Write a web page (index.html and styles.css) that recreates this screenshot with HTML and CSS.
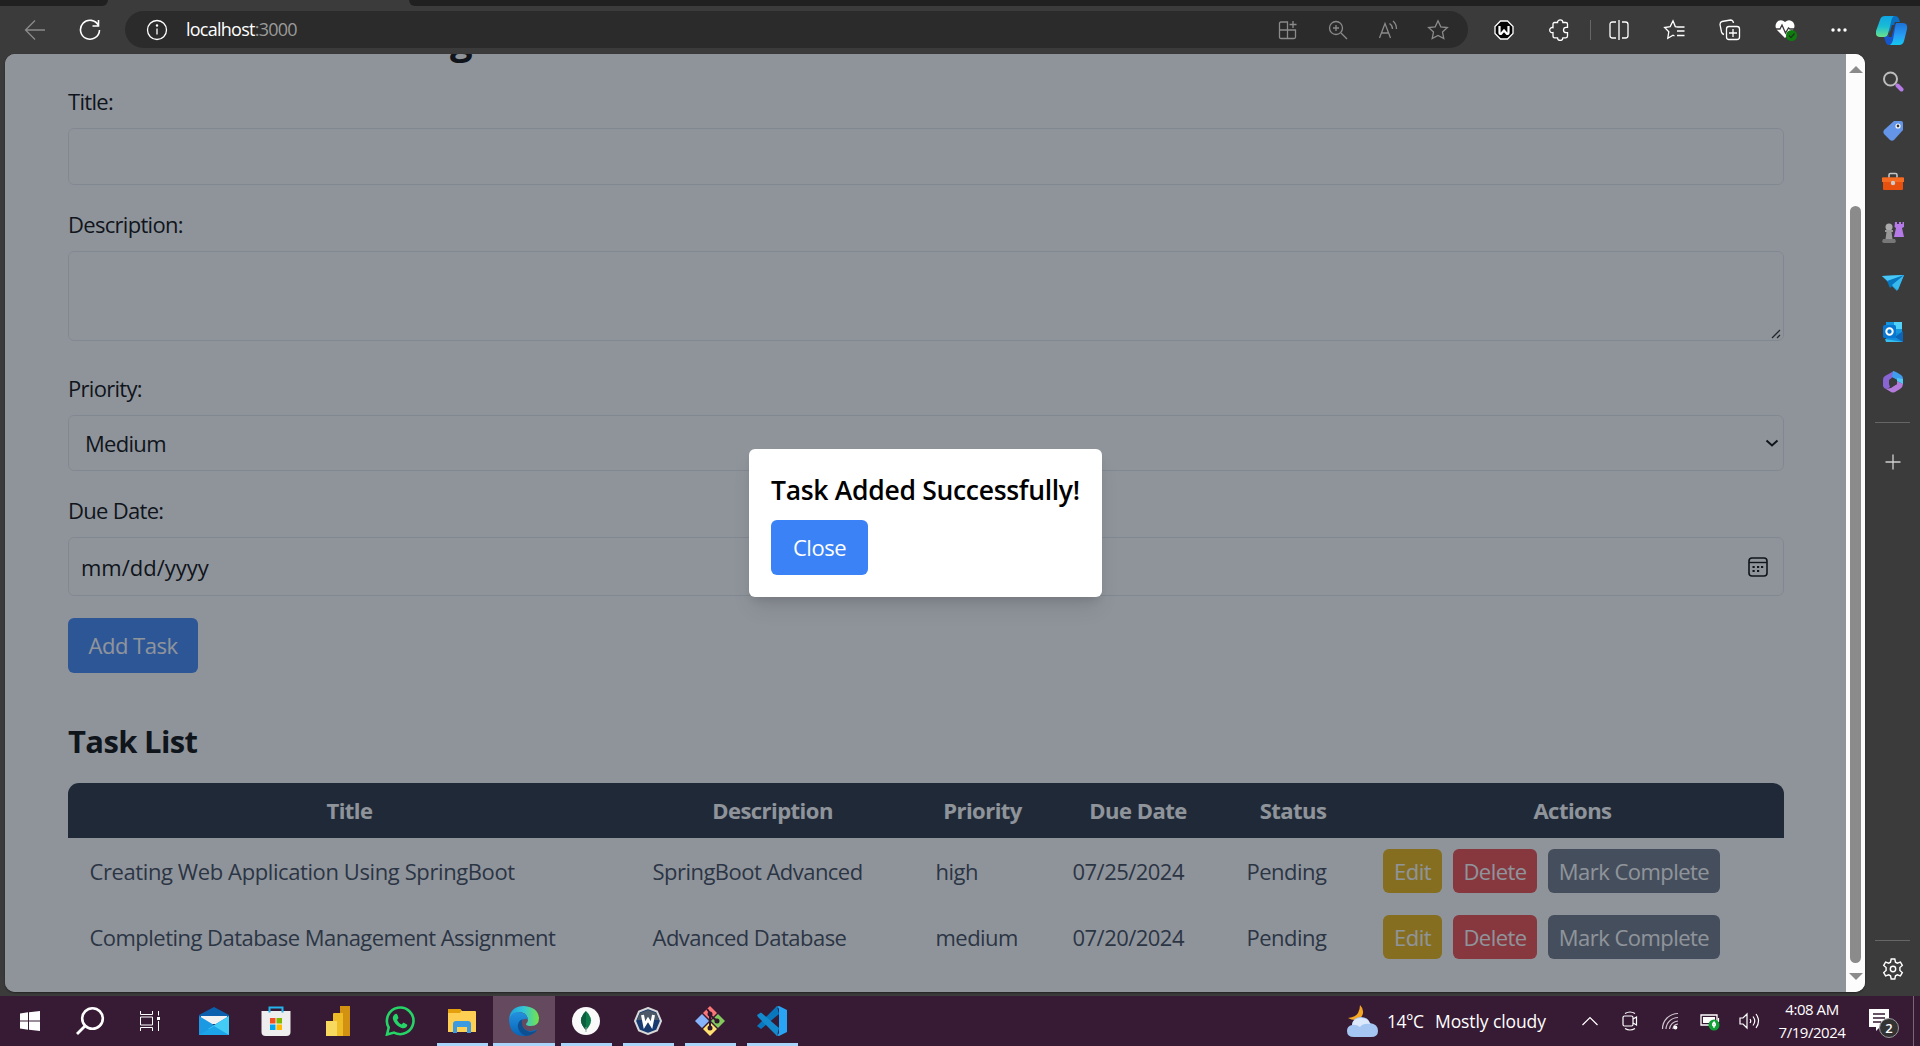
FILE: index.html
```html
<!DOCTYPE html>
<html lang="en">
<head>
<meta charset="utf-8">
<title>Task Manager</title>
<link rel="stylesheet" href="styles.css">
</head>
<body>
<div class="screen">
  <div class="tabs"><div class="tab-left"></div><div class="tab-right"></div></div>
  <header class="toolbar">
    <div class="tool dim"><svg width="22" height="22" viewBox="0 0 22 22"><path d="M21 11H1.500M11 1.500L1.500 11l9.500 9.500"/></svg></div>
    <div class="tool reload"><svg width="22" height="22" viewBox="0 0 22 22"><path d="M19.500 6.500A9.500 9.500 0 1 0 20.500 11M19.500 1v6h-6" stroke-width="1.600"/></svg></div>
    <div class="address">
      <div class="tool"><svg width="22" height="22" viewBox="0 0 22 22"><circle cx="11" cy="11" r="9.500"/><path d="M11 9.500v6"/><circle cx="11" cy="6.500" r=".6"/></svg></div>
      <div class="url">localhost<span class="port">:3000</span></div>
      <div class="slot grey"><svg width="20" height="20" viewBox="0 0 20 20"><path d="M1.500 10h16v7q0 1.500-1.500 1.500H3q-1.500 0-1.500-1.500V3.500Q1.500 2 3 2h6.500v16.500M15 1v7M11.500 4.500h7"/></svg></div>
      <div class="slot grey"><svg width="20" height="20" viewBox="0 0 20 20"><circle cx="8" cy="8" r="6.500"/><path d="M13 13l6 6M8 5v6M5 8h6"/></svg></div>
      <div class="slot grey"><svg width="20" height="20" viewBox="0 0 20 20"><path d="M1.500 18L7 3.500 12.500 18M3.500 13h7M11.500 3.500q3 2 3 5.500M15 1q3.500 3 3.500 8"/></svg></div>
      <div class="slot grey"><svg width="22" height="22" viewBox="0 0 22 22"><path d="M11 1.800l2.800 6 6.600.8-4.900 4.500 1.300 6.500L11 16.400l-5.800 3.200 1.300-6.500L1.600 8.600l6.600-.8z"/></svg></div>
    </div>
    <div class="actions">
      <div class="ext"><svg width="20" height="20" viewBox="0 0 20 20"><path d="M6.500 1h7L19 6.500v7L13.500 19h-7L1 13.500v-7z" fill="#050505"/><path d="M5.500 6v6.500q0 1.500 1.500 1.500h0L10 10.500l3 3.500q1.500 0 1.500-1.500V6" stroke-width="2.200"/></svg></div>
      <div class="ext"><svg width="22" height="22" viewBox="0 0 22 22"><path d="M4 5q0-1.500 1.500-1.500H8.500a2.700 2.700 0 0 1 5.400 0h3q1.600 0 1.600 1.500v3.300h-1.300a2.700 2.700 0 0 0 0 5.400h1.300V17q0 1.800-1.600 1.800h-3a2.700 2.700 0 0 1-5.400 0H5.500Q4 18.800 4 17v-3.400a2.600 2.600 0 1 1 0-5z"/></svg></div>
      <div class="ext split"><svg width="20" height="20" viewBox="0 0 20 20"><path d="M10 0v20M7 2H3.500Q1 2 1 4.500v11Q1 18 3.500 18H7M13 2h3.500Q19 2 19 4.500v11q0 2.500-2.500 2.500H13"/></svg></div>
      <div class="ext"><svg width="22" height="22" viewBox="0 0 22 22"><path d="M15 8l-2.700-.4L10 1.800 7.200 7.600 1.600 8.500l4.200 4.200-1 6.500L10 16.200l1.500.8M14 8h7.500M14 12h7.500M14 16.500h7.500"/></svg></div>
      <div class="ext"><svg width="22" height="22" viewBox="0 0 22 22"><rect x="7.500" y="7.500" width="13" height="13" rx="2.500"/><path d="M14 10v8M10 14h8M5 15.500Q3 15 2.500 13L1 5.500Q1 3 3 2.500L11.500 1Q14 1 14.500 4"/></svg></div>
      <div class="ext"><svg width="24" height="24" viewBox="0 0 24 24"><path d="M11 20L3 12Q0 8 3 4q4-3.500 8 0 4-3.500 8 0 3 4 0 8z" fill="#fff" stroke="none"/><path d="M1 11h5l2-4 3.500 8 3-5 1.500 1h4" stroke="#3b3b3b"/><circle cx="17.500" cy="17.500" r="5.500" fill="#107c10" stroke="none"/><path d="M15 17.500l2 2 3.500-4" stroke="#1c351c"/></svg></div>
      <div class="ext dots"><svg width="20" height="20" viewBox="0 0 20 20"><g fill="#fff" stroke="none"><circle cx="4" cy="10" r="1.700"/><circle cx="10" cy="10" r="1.700"/><circle cx="16" cy="10" r="1.700"/></g></svg></div>
      <div class="ext copilot"><svg width="32" height="30" viewBox="0 0 32 30"><defs><linearGradient id="ca" x2="0" y2="1"><stop stop-color="#10a5e5"/><stop offset=".5" stop-color="#19bdd4"/><stop offset="1" stop-color="#6ce28b"/></linearGradient><linearGradient id="cb" x2="0" y2="1"><stop stop-color="#1c71d8"/><stop offset=".6" stop-color="#279ff5"/><stop offset="1" stop-color="#15c8ef"/></linearGradient></defs><g stroke="none"><path d="M10 1h9q3 0 4 3l1 3h-5l-5 13z" fill="#0b6fc2"/><path d="M8 22l6-3 5-10h7q6 0 4 7l-3 11q-1 3-5 3H13q-3 0-4-5z" fill="#1755cb"/><path d="M9 1h9q-2 1-3 6l-3 12q-1 3-4 3H4q-5 0-4-6L4 5q1-4 5-4z" fill="url(#ca)"/><path d="M20 8h7q5 0 4 6l-3 12q-1 4-5 4h-9q2-1 3-5z" fill="url(#cb)"/><path d="M16 10h3l-3.500 12h-3z" fill="#3b3b3b"/></g></svg></div>
    </div>
  </header>

  <div class="middle">
    <div class="viewport">
      <main class="page">
        <h1 class="page-title">g</h1>
        <label class="label">Title:</label>
        <div class="field title-field"></div>
        <label class="label">Description:</label>
        <div class="field area"><svg width="10" height="10" viewBox="0 0 10 10"><path d="M1 9l8-8M6 9l3-3" stroke="#222" stroke-width="1.300"/></svg></div>
        <label class="label">Priority:</label>
        <div class="field select"><span class="medium">Medium</span><svg width="14" height="14" viewBox="0 0 14 14"><path d="M1.500 4.500L7 9.500l5.500-5" stroke="#000" stroke-width="2"/></svg></div>
        <label class="label">Due Date:</label>
        <div class="field date"><span class="mask">mm/dd/yyyy</span><svg width="20" height="20" viewBox="0 0 20 20" stroke="#000"><rect x="1" y="1" width="18" height="18" rx="3" stroke-width="1.600"/><path d="M1 5.500h18" stroke-width="1.400"/><path d="M4.500 10h2.200M9 10h2.200M13 10h2.200M4.500 14h2.200M9 14h2.200" stroke-width="2"/></svg></div>
        <div class="btn add">Add Task</div>
        <h2 class="list-title">Task List</h2>
        <div class="table">
          <div class="row head"><div>Title</div><div>Description</div><div>Priority</div><div>Due Date</div><div>Status</div><div>Actions</div></div>
          <div class="row"><div class="wide">Creating Web Application Using SpringBoot</div><div>SpringBoot Advanced</div><div>high</div><div>07/25/2024</div><div>Pending</div><div class="ops"><span class="op edit">Edit</span><span class="op del">Delete</span><span class="op mark">Mark Complete</span></div></div>
          <div class="row"><div>Completing Database Management Assignment</div><div>Advanced Database</div><div>medium</div><div>07/20/2024</div><div>Pending</div><div class="ops"><span class="op edit">Edit</span><span class="op del">Delete</span><span class="op mark">Mark Complete</span></div></div>
        </div>
      </main>
      <div class="scrollbar"><i class="up"></i><i class="thumb"></i><i class="down"></i></div>
      <div class="overlay">
        <div class="modal"><h3 class="modal-title">Task Added Successfully!</h3><div class="btn close">Close</div></div>
      </div>
    </div>

    <aside class="sidebar">
      <div class="side"><svg width="22" height="22" viewBox="0 0 22 22"><circle cx="8.500" cy="9" r="6.500" stroke="#bdbdbd" stroke-width="2"/><path d="M14 14l2 2" stroke="#999" stroke-width="2"/><path d="M15.500 15.500l4 4" stroke="#b77be8" stroke-width="4" stroke-linecap="round"/></svg></div>
      <div class="side"><svg width="22" height="22" viewBox="0 0 22 22"><path d="M12 1h7q2 0 2 2v7l-9 10q-2 1.500-4 0l-6-6q-1.500-2 0-4z" fill="#6495e8"/><circle cx="16" cy="6" r="2" fill="#333" stroke="#fff" stroke-width="1.200"/></svg></div>
      <div class="side"><svg width="22" height="20" viewBox="0 0 22 20"><path d="M7 7V4q0-1.500 1.500-1.500h5Q15 2.500 15 4v3" stroke="#c5c5c5" stroke-width="1.600"/><path d="M1 6.500h20V18q0 1-1 1H2q-1 0-1-1z" fill="#e8510d"/><path d="M0 6.500h22V11H0z" fill="#f56b22"/><circle cx="11" cy="12" r="2.200" fill="#ccc"/></svg></div>
      <div class="side"><svg width="22" height="22" viewBox="0 0 22 22"><path d="M13 1h2v2h2V1h2v2h1.500V1H22v5l-2 1 2 9H12l2-9-1.500-1z" fill="#b57ae8"/><circle cx="7" cy="6" r="3.500" fill="#aaa"/><path d="M3 9h8v2H9.500l1 7h-7l1-7H3z" fill="#989898"/><path d="M1 18h12q2 4-1 4H2q-3 0-1-4z" fill="#777"/></svg></div>
      <div class="side"><svg width="22" height="20" viewBox="0 0 22 20"><path d="M0 4l22-1-7 16-5-5z" fill="#27a9ea"/><path d="M0 4l22-1L7 10z" fill="#48c8f7"/><path d="M5 9l17-6L8 16z" fill="#0877bf"/><path d="M22 3L10 13l6 5z" fill="#35b9ef"/></svg></div>
      <div class="side"><svg width="22" height="22" viewBox="0 0 22 22"><path d="M4 1h16v13H4z" fill="#1595dd"/><path d="M12 1h8v7h-8z" fill="#50d2fb"/><path d="M4 12h17v9H4z" fill="#118bdc"/><path d="M13 16l8-6v11z" fill="#0c64b5"/><path d="M3 18l18 3H4z" fill="#37bff0"/><rect x="1" y="4" width="13" height="13" rx="1.500" fill="#0877d1"/><circle cx="7.500" cy="10.500" r="3.200" stroke="#fff" stroke-width="2"/></svg></div>
      <div class="side"><svg width="22" height="22" viewBox="0 0 22 22"><path d="M12 0L3 5Q1 6 1 9v6q1 3 4 3l3-2-1-3V9l5-4z" fill="#8965d4"/><path d="M11 0q2 0 8 4 2 1 2 4v5l-6-4-5-3z" fill="#3f9df0"/><path d="M21 13q0 3-3 5l-5 3q-2 1-4 0l-5-3 5-1 6-4v-3z" fill="#b47bdd"/><path d="M15 7l6 1v5l-6-3z" fill="#4fc8f6"/><path d="M8 9l3-2 4 2v4l-4 2-3-2z" fill="#3b3b3b"/></svg></div>
      <div class="rule"></div>
      <div class="side plus"><svg width="16" height="16" viewBox="0 0 16 16"><path d="M8 .5v15M.5 8h15" stroke="#d0d0d0" stroke-width="1.300"/></svg></div>
      <div class="rule low"></div>
      <div class="side gear"><svg width="22" height="22" viewBox="0 0 22 22"><path d="M9.200 1h3.600l.7 3.200 1.800 1 3.100-1 1.900 3.200-2.400 2.200v2.800l2.400 2.200-1.900 3.200-3.100-1-1.800 1-.7 3.200H9.200l-.7-3.200-1.800-1-3.100 1-1.900-3.200 2.400-2.200V9.600L1.700 7.400l1.900-3.200 3.100 1 1.800-1z" stroke="#fff" stroke-width="1.400"/><circle cx="11" cy="11" r="2.700" stroke="#fff" stroke-width="1.400"/></svg></div>
    </aside>
  </div>

  <footer class="taskbar">
    <div class="task small"><svg width="20" height="20" viewBox="0 0 20 20"><path d="M0 2.500L8 1.300v8.200H0zM9 1.200L20 0v9.500H9zM0 10.500h8v8.200L0 17.500zM9 10.500h11V20L9 18.800z" fill="#fff"/></svg></div>
    <div class="task small"><svg width="30" height="30" viewBox="0 0 30 30"><circle cx="17.500" cy="12.500" r="10.300" stroke="#fff" stroke-width="2.600"/><path d="M10 20l-8 8" stroke="#fff" stroke-width="2.800"/></svg></div>
    <div class="task small"><svg width="20" height="20" viewBox="0 0 20 20"><path d="M.5 0v3.500h12V0M.5 20v-3.500h12V20M.5 6h12v8H.5zM18.500 0v4.500M18.500 10v10" stroke="#fff"/><rect x="17" y="6" width="3" height="3" fill="#fff"/></svg></div>
    <div class="task mail"><svg width="30" height="30" viewBox="0 0 30 30"><path d="M0 9L15 1l15 8v3H0z" fill="#0b60ad"/><path d="M2 10h26v8H2z" fill="#f1f1f1"/><path d="M0 10l15 9 15-9v19H0z" fill="#1b99e3"/><path d="M30 10L9 23l21 6z" fill="#42cbf5"/><path d="M0 29l15-9 15 9z" fill="#1da5e9"/></svg></div>
    <div class="task"><svg width="30" height="30" viewBox="0 0 30 30"><path d="M8.500 7V1.500h13V7" stroke="#24b4ed" stroke-width="2"/><path d="M.5 5h29v21q0 4-4 4h-21q-4 0-4-4z" fill="#eee"/><path d="M8.500 5v1.500M21.500 5v1.500" stroke="#24b4ed" stroke-width="2"/><path d="M9 12h5.500v5.500H9z" fill="#f25022"/><path d="M15.500 12H21v5.500h-5.500z" fill="#7fba00"/><path d="M9 18.500h5.500V24H9z" fill="#00a4ef"/><path d="M15.500 18.500H21V24h-5.500z" fill="#ffb900"/></svg></div>
    <div class="task"><svg width="24" height="30" viewBox="0 0 24 30"><path d="M14 0h10v30H14z" fill="#d39112"/><path d="M7 8q0-1 1-1h9v23H7z" fill="#edbc26"/><path d="M0 15h11v15H0z" fill="#f7d95f"/></svg></div>
    <div class="task"><svg width="30" height="30" viewBox="0 0 30 30"><path d="M2 28.500l1.700-7A13.300 13.300 0 1 1 9 26.600z" stroke="#25d366" stroke-width="2.600"/><path d="M9.500 8.500q2-1.500 3 .5l1 3-1.500 2q1.500 3 4.500 4.500l2-2 3.500 2q1 1-1 3-2 1.500-5 .3-5-2-7.500-7-1.800-4 1-6.300z" fill="#25d366"/></svg></div>
    <div class="task open"><svg width="28" height="24" viewBox="0 0 28 24"><path d="M0 1q0-1 1-1h11l2 2h13q1 0 1 1v20H0z" fill="#ffcf54"/><path d="M0 1q0-1 1-1h11l1.500 1.500L12 4H0z" fill="#e5a00d"/><path d="M5 24v-9q0-3 3-3h12q3 0 3 3v9h-4v-6H9v6z" fill="#3c9ae0"/></svg></div>
    <div class="task open active"><svg width="30" height="30" viewBox="0 0 30 30"><defs><linearGradient id="e1"><stop stop-color="#1b9fdf"/><stop offset=".5" stop-color="#35c6d7"/><stop offset="1" stop-color="#75e445"/></linearGradient><linearGradient id="e2" x2="0" y2="1"><stop stop-color="#2392df"/><stop offset="1" stop-color="#0964b8"/></linearGradient></defs><path d="M0 14Q1 0 15 0q14 1 15 12 0 8-8 8-5 0-5-2 2-2 2-4-1-8-9-8Q3 7 0 14z" fill="url(#e1)"/><path d="M0 14Q2 6 9 6q9 0 10 8-2-2-4-1-4 2-2 7 3 6 10 5l5-2q-4 7-13 7Q1 30 0 14z" fill="url(#e2)"/><path d="M14 13q-6 2-5 9 2 6 8 8 8-1 11-6-4 2-7 2-8-3-8-8-1-3 1-5z" fill="#0e4f92"/></svg></div>
    <div class="task open"><svg width="28" height="28" viewBox="0 0 28 28"><circle cx="14" cy="14" r="14" fill="#fafafa"/><path d="M14 4q10 9 0 19Q4 13 14 4z" fill="#0e7b4b"/><path d="M14 4q-10 9 0 19z" fill="#0b5e3e"/><path d="M14 20v5" stroke="#8da99a"/></svg></div>
    <div class="task open"><svg width="28" height="28" viewBox="0 0 28 28"><path d="M14 1l9 3.500L27 14l-4 9.500L14 27l-9-3.500L1 14l4-9.500z" fill="#173a70" stroke="#d8d8d8" stroke-width="2"/><path d="M14 3L6 6l-3 7h22l-3-7z" fill="#4c5866"/><path d="M8.500 8l2 10L14 12.500l3.500 5.500 2-10" stroke="#fff" stroke-width="3"/></svg></div>
    <div class="task open"><svg width="30" height="30" viewBox="0 0 30 30"><path d="M15 0l7 7-7 7-7-7z" fill="#fb7777"/><path d="M7 8l7 7-7 7-7-7z" fill="#87b3fb"/><path d="M23 8l7 7-7 7-7-7z" fill="#83c95b"/><path d="M15 16l7 7-7 7-7-7z" fill="#ffe071"/><path d="M12 3l3 4v14M15 9l7 6" stroke="#31172f" stroke-width="2"/><g fill="#31172f"><circle cx="15" cy="8" r="2.500"/><circle cx="22" cy="15" r="2.500"/><circle cx="15" cy="22" r="2.500"/></g></svg></div>
    <div class="task open"><svg width="30" height="30" viewBox="0 0 30 30"><path d="M22 8L4 23l-4-3 1-1L20 0z" fill="#0877bd"/><path d="M22 22L4 6.500 0 9l1 2 19 19z" fill="#148ace"/><path d="M22 0l8 4v22l-8 4-3-1q3 0 3-3V4q0-3-3-3z" fill="#29a4f4"/></svg></div>
    <div class="tray">
      <svg class="weather" width="31" height="34" viewBox="0 0 31 34"><path d="M13 1q5 5 2 11-5 7-14 2 8-1 10-5 2-4 2-8z" fill="#f5a623"/><path d="M7 33q-7 0-7-6 0-5 5-6 1-8 9-8 7 0 9 6 8 1 8 8 0 6-7 6z" fill="#a5c5f3"/><path d="M5 21q1-7 9-7t9 6q-7-1-10 3-4-3-8-2z" fill="#dce9fc"/></svg>
      <span class="temp">14°C</span><span class="cloudy">Mostly cloudy</span>
      <div class="tray-icon"><svg width="16" height="10" viewBox="0 0 16 10"><path d="M.5 9L8 1.500 15.500 9"/></svg></div>
      <div class="tray-icon"><svg width="16" height="20" viewBox="0 0 16 20"><rect x="1" y="5" width="10" height="10" rx="1.500"/><path d="M11 8l3.500-2v8L11 12M3 2.500q5-3 10 0M3 17.500q5 3 10 0"/></svg></div>
      <div class="tray-icon"><svg width="18" height="18" viewBox="0 0 18 18"><g opacity=".75"><path d="M1.500 17A15.500 15.500 0 0 1 17 1.500M5 17A12 12 0 0 1 17 5.500M8.500 17A9 9 0 0 1 17 9"/><path d="M12 17a5.500 5.500 0 0 1 5-5"/></g><circle cx="14.500" cy="15.500" r="1.300" fill="#fff"/></svg></div>
      <div class="tray-icon"><svg width="20" height="20" viewBox="0 0 20 20"><path d="M1 4h16v10H1z" stroke-width="1.300"/><path d="M3 6h12v6H3z" fill="#fff" stroke="none"/><path d="M18.500 7v4"/><circle cx="14" cy="14" r="5.500" fill="#109f35" stroke="none"/><path d="M14 11q3 2.500 0 4.500-3-2 0-4.500v6"/></svg></div>
      <div class="tray-icon"><svg width="22" height="18" viewBox="0 0 22 18"><path d="M1 6h3l4-4v14l-4-4H1zM11 7q1.500 2 0 4M14 4.500q3.500 4.500 0 9M17 2q5 7 0 14"/></svg></div>
      <div class="clock"><span class="time">4:08 AM</span><span class="day">7/19/2024</span></div>
      <div class="notice"><svg width="20" height="22" viewBox="0 0 20 22"><path d="M0 0h20v18h-9l-4 4v-4H0z" fill="#fff"/><path d="M4 5h12M4 9h12M4 13h8" stroke="#371a33" stroke-width="1.300"/></svg><span class="badge">2</span></div>
      <i class="peek"></i>
    </div>
  </footer>
</div>
</body>
</html>
```
FILE: styles.css
```css
* { box-sizing: border-box; }
body { margin: 0; background: #3b3b3b; font-family: "Open Sans", "Noto Sans", sans-serif; }
svg { fill: none; display: block; flex: none; }
h1, h2, h3 { margin: 0; }
.screen { width: 1920px; height: 1046px; overflow: hidden; display: flex; flex-direction: column; background: #3b3b3b; }

/* browser chrome */
.tabs { display: flex; justify-content: space-between; height: 6px; flex: none; }
.tab-left { width: 108px; background: #202020; border-bottom-right-radius: 6px; }
.tab-right { width: 1511px; background: #202020; border-bottom-left-radius: 6px; }
.toolbar { display: flex; align-items: center; height: 48px; flex: none; padding: 0 0 1px 15px; stroke: #fff; stroke-width: 1.3; }
.tool, .slot, .ext, .side, .task, .tray-icon { display: flex; align-items: center; justify-content: center; flex: none; }
.tool { width: 40px; }
.dim, .grey { stroke: #8b8b8b; }
.reload { margin: 0 15px; }
.address { display: flex; align-items: center; width: 1343px; height: 37px; border-radius: 19px; background: #2b2b2b; padding: 0 5px 0 12px; }
.url { flex: 1; margin-left: 9px; color: #fff; font-size: 18px; letter-spacing: -.75px; line-height: 24px; padding-bottom: 1px; }
.port { color: #9a9a9a; }
.slot { width: 50px; }
.actions { display: flex; align-items: center; margin-left: 8px; }
.ext { width: 56px; height: 20px; }
.split { margin-left: 2px; border-left: 1px solid #666; }
.dots { width: 50px; }

.middle { display: flex; height: 938px; flex: none; }
.viewport { position: relative; display: flex; width: 1860px; margin-left: 5px; border-radius: 10px; overflow: hidden; background: #fff; box-shadow: 0 1px 2px #222; }
.page { width: 1841px; padding: 0 62px 0 63px; display: flex; flex-direction: column; font-size: 22px; color: #000; }
.page-title { height: 62px; padding-left: 382px; line-height: 60px; font-size: 40px; margin: -45px 0 14px; }
.label { line-height: 32px; height: 33px; flex: none; margin-bottom: 10px; letter-spacing: -.7px; }
.field { display: flex; align-items: center; justify-content: space-between; flex: none; border: 1px solid #e5e7eb; border-radius: 6px; margin-bottom: 23px; }
.title-field { height: 57px; }
.area { height: 90px; align-items: flex-end; justify-content: flex-end; padding: 1px 2px; margin-bottom: 31px; }
.select { height: 56px; padding: 0 4px 0 16px; }
.medium { letter-spacing: -.7px; }
.date { height: 59px; padding: 0 15px 0 12px; margin-bottom: 22px; }
.btn { display: flex; align-items: center; justify-content: center; height: 55px; border-radius: 6px; background: #3b82f6; color: #fff; font-size: 22px; flex: none; letter-spacing: -.5px; padding-bottom: 2px; }
.add { width: 130px; }
.list-title { font-size: 31px; line-height: 44px; margin: 46px 0 20px; letter-spacing: -.65px; }
.table { flex: none; border-radius: 11px 11px 0 0; overflow: hidden; color: #374151; letter-spacing: -.53px; }
.row { display: grid; grid-template-columns: 563px 283px 137px 174px 136px 423px; height: 66px; align-items: center; white-space: nowrap; }
.row > div { padding-left: 21.5px; padding-bottom: 1px; }
.row > .wide { letter-spacing: -.4px; }
.head { height: 55px; background: #1f2937; color: #fff; font-weight: 700; }
.row.head > div { text-align: center; padding: 0 0 1px; }
.row > .ops { display: flex; gap: 11px; padding: 0 0 0 22px; }
.op { display: flex; align-items: center; justify-content: center; height: 44px; border-radius: 6px; color: #fff; padding-bottom: 1px; }
.edit { width: 59px; background: #eab308; }
.del { width: 84px; background: #ef4444; }
.mark { width: 172px; background: #6b7280; }
.scrollbar { width: 19px; background: #fcfcfc; display: flex; flex-direction: column; align-items: center; }
.up { margin-top: 12px; border: 7px solid transparent; border-top: 0; border-bottom: 7px solid #8b8b8b; }
.thumb { width: 11px; height: 757px; margin-top: 133px; border-radius: 6px; background: #8b8b8b; }
.down { margin-top: 10px; border: 7px solid transparent; border-bottom: 0; border-top: 7px solid #8b8b8b; }
.overlay { position: absolute; inset: 0 19px 0 0; display: flex; align-items: center; justify-content: center; background: rgba(31, 41, 55, .5); }
.modal { width: 353px; height: 148px; padding: 22px; background: #fff; border-radius: 6px; box-shadow: 0 14px 21px -4px rgba(0,0,0,.1), 0 6px 8px -3px rgba(0,0,0,.1); }
.modal-title { font-size: 26.5px; line-height: 38px; font-weight: 600; letter-spacing: -.3px; margin-bottom: 11px; white-space: nowrap; }
.close { width: 97px; }

.sidebar { width: 55px; padding-top: 2px; display: flex; flex-direction: column; align-items: center; }
.side { width: 55px; height: 50.200px; }
.rule { width: 35px; height: 1px; background: #666; margin-top: 15px; flex: none; }
.plus { height: 78px; }
.low { margin-top: 439px; }
.gear { height: 56px; }

/* desktop taskbar */
.taskbar { display: flex; height: 50px; margin-top: 4px; background: #371a33; color: #fff; flex: none; }
.task { width: 62px; padding-bottom: 1px; position: relative; flex: none; }
.small { width: 60px; }
.mail { margin-left: 3px; }
.open::after { content: ""; position: absolute; left: 6px; right: 5px; bottom: 0; height: 3px; background: #a9d5fb; }
.active { background: #64495f; }
.active::after { left: 0; right: 0; }
.tray { flex: 1; display: flex; align-items: center; padding-left: 544px; white-space: nowrap; stroke: #fff; stroke-width: 1.2; }
.weather { stroke: none; }
.temp { width: 36px; margin-left: 9px; font-size: 17.500px; letter-spacing: -.5px; padding-bottom: 1px; }
.cloudy { width: 135px; margin-left: 12px; font-size: 17.500px; letter-spacing: -.1px; padding-bottom: 1px; }
.tray-icon { width: 40px; }
.clock { width: 84px; display: flex; flex-direction: column; align-items: center; font-size: 15px; line-height: 23px; letter-spacing: -.45px; padding-top: 0; }
.notice { position: relative; margin-left: 15px; width: 44px; height: 24px; }
.notice svg { stroke: none; }
.peek { width: 1px; height: 50px; background: #7b6677; }
.badge { position: absolute; left: 10px; top: 9px; width: 20px; height: 20px; border: 1px solid #999; border-radius: 50%; background: #333; font-size: 13px; line-height: 18px; text-align: center; font-weight: 600; }
```
